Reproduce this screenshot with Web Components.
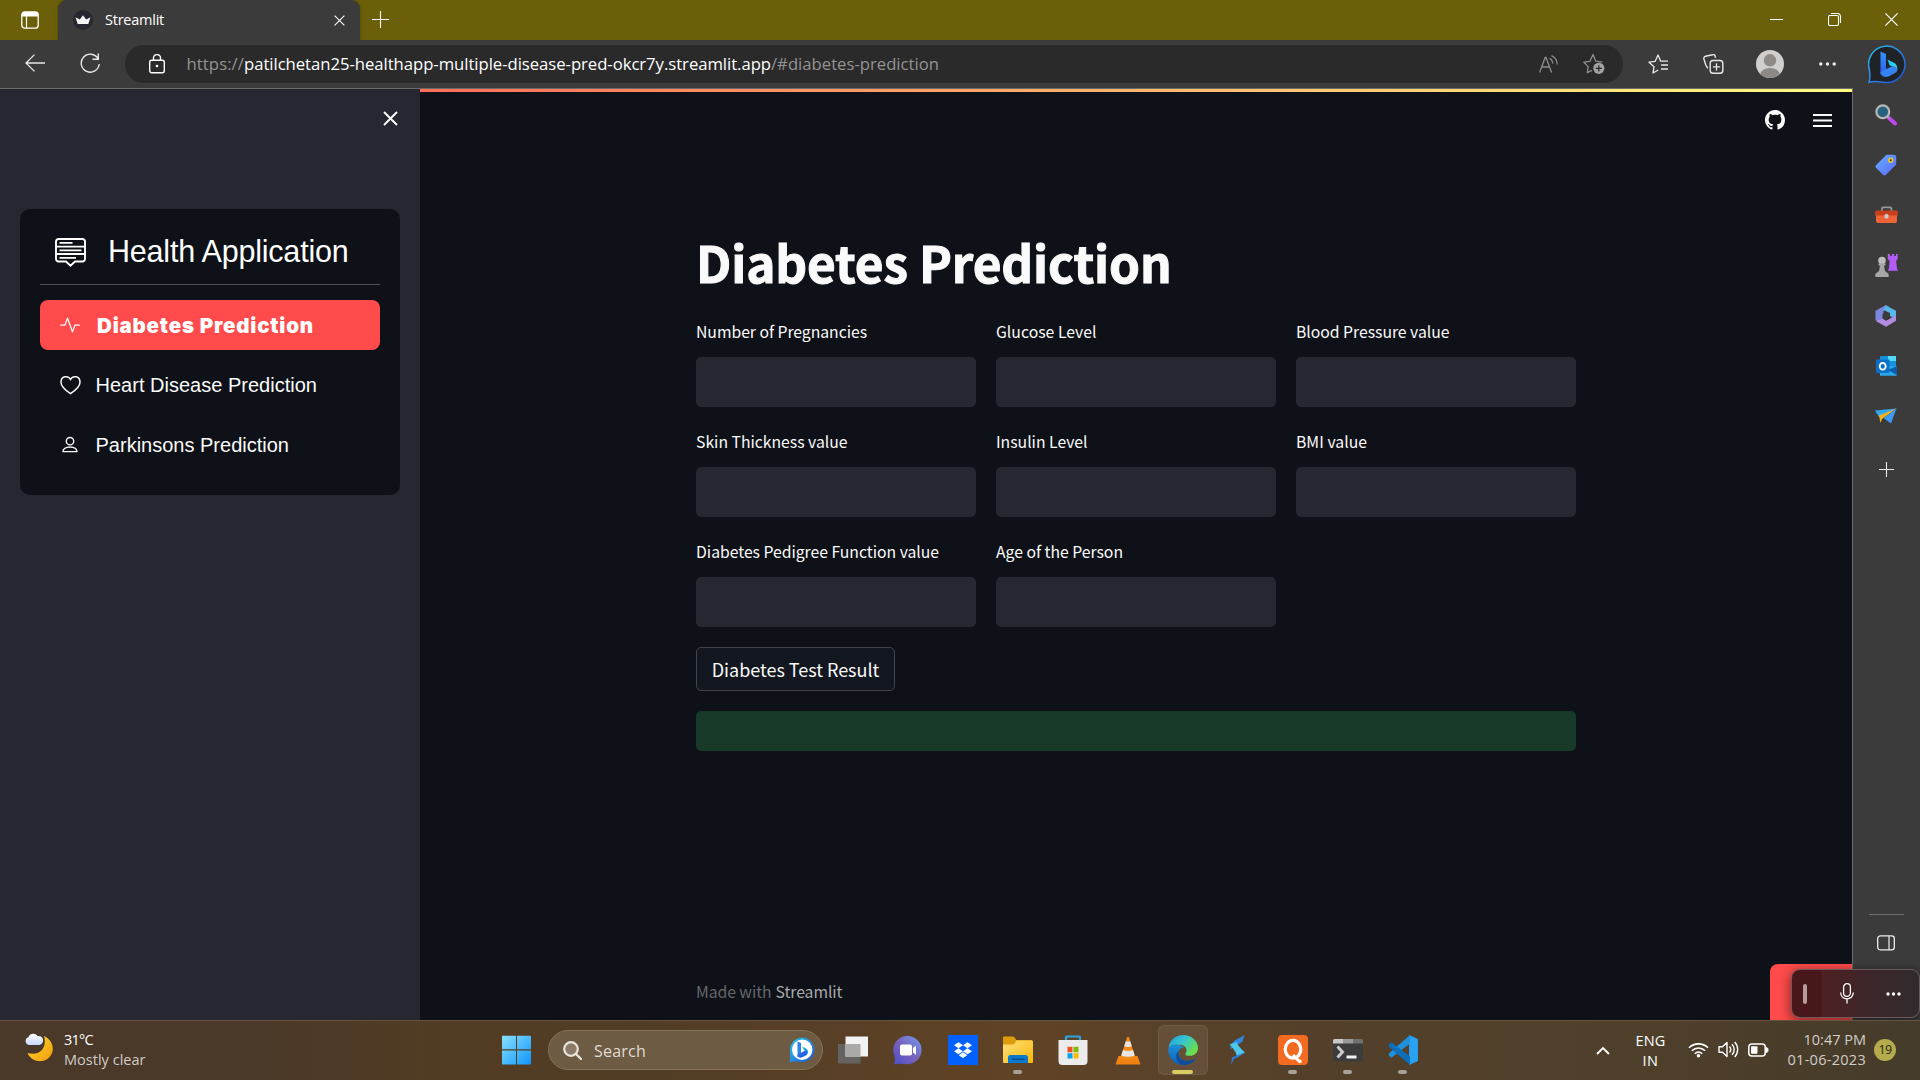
<!DOCTYPE html>
<html lang="en">
<head>
<meta charset="utf-8">
<title>Streamlit</title>
<style>
html,body{margin:0;height:100%;overflow:hidden;background:#0e1117}
</style>
</head>
<body>
<desktop-screen></desktop-screen>
<script>
const ICONS = {
  workspaces:[18,18,`<rect x=".8" y=".8" width="16.4" height="16.4" rx="3" fill="none" stroke="#fff" stroke-width="1.3"/><path d="M1 4a3 3 0 0 1 3-3h10a3 3 0 0 1 3 3v1.500H1z" fill="#fff"/><path d="M5.500 5v12" stroke="#fff" stroke-width="1.200"/>`],
  crown:[20,20,`<circle cx="10" cy="10" r="10" fill="#262730"/><path d="M2.500 7.200 6.800 9.600 10 5.200l3.200 4.400 4.300-2.400-2.200 6.800H4.700z" fill="#f4f4f4"/>`],
  close11:[11,11,`<path d="M.6.6l9.800 9.800M10.400.6.6 10.400" stroke="#fff" stroke-width="1.100"/>`],
  plus17:[17,17,`<path d="M8.500 0v17M0 8.500h17" stroke="#fff" stroke-width="1.100"/>`],
  min:[13,13,`<path d="M0 6.500h13" stroke="#fff"/>`],
  restore:[13,13,`<rect x=".5" y="2.500" width="10" height="10" rx="1.500" fill="none" stroke="#fff" stroke-width="1.100"/><path d="M3 .5h6.500a3 3 0 0 1 3 3V10" fill="none" stroke="#fff" stroke-width="1.100"/>`],
  close13:[13,13,`<path d="M.4.4l12.200 12.200M12.600.4.4 12.600" stroke="#fff" stroke-width="1.200"/>`],
  back:[20,18,`<path d="M20 9H1M9.500.6 1 9l8.500 8.400" fill="none" stroke="#e8e8e8" stroke-width="1.300"/>`],
  reload:[20,21,`<path d="M18 5.600A9 9 0 1 0 19.200 11M18.300.5v5.700h-5.800" fill="none" stroke="#e8e8e8" stroke-width="1.400"/>`],
  lock:[16,20,`<rect x=".7" y="6.200" width="14.600" height="12.600" rx="2" fill="none" stroke="#fff" stroke-width="1.400"/><path d="M4.500 6V4a3.500 3.500 0 0 1 7 0v2" fill="none" stroke="#fff" stroke-width="1.400"/><circle cx="8" cy="12" r="1.300" fill="#fff"/>`],
  aloud:[19,18,`<path d="M.6 17.500 6.200 2.500h.8l5.600 15M2.600 12h8" fill="none" stroke="#8d8d8d" stroke-width="1.300"/><path d="M10.600 3.300a6.500 6.500 0 0 1 3.200 5.200M12.500.6a10 10 0 0 1 5.700 8.800" fill="none" stroke="#8d8d8d" stroke-width="1.200"/>`],
  staradd:[22,22,`<path d="M9 17.300 4.300 19.600l.9-6L.9 9.200l6-.9L10 1.500l2.800 6.700 6.600.9" fill="none" stroke="#8d8d8d" stroke-width="1.300" stroke-linejoin="round"/><circle cx="15.800" cy="15.300" r="5.600" fill="#a2a2a2"/><path d="M15.800 12.200v6.200M12.700 15.300h6.200" stroke="#2a2a2a" stroke-width="1.200"/>`],
  favs:[21,20,`<path d="M10.200 16 5 19l1-6.200L1 8.200l6.200-.9L10 1l2.700 6.200H20M13 11h7M13 15h7" fill="none" stroke="#e8e8e8" stroke-width="1.300" stroke-linejoin="round"/>`],
  collections:[21,20,`<rect x="7.200" y="6.500" width="12.600" height="12.700" rx="2.800" fill="none" stroke="#e8e8e8" stroke-width="1.400"/><path d="M13.500 9.300v7.200M9.900 12.900h7.200" stroke="#e8e8e8" stroke-width="1.300"/><path d="M4.800 14.300 2.800 11 .9 5a2.200 2.200 0 0 1 1.600-2.700l7-1.600a2.200 2.200 0 0 1 2.700 1.500l.4 1.500" fill="none" stroke="#e8e8e8" stroke-width="1.400"/>`],
  avatar:[28,28,`<defs><clipPath id="c"><circle cx="14" cy="14" r="14"/></clipPath></defs><circle cx="14" cy="14" r="14" fill="#d1cfcd"/><g clip-path="url(#c)" fill="#8e8984"><circle cx="14" cy="10.300" r="6.200"/><ellipse cx="14" cy="25" rx="10" ry="7"/></g>`],
  dots:[17,4,`<g fill="#eee"><circle cx="1.800" cy="2" r="1.700"/><circle cx="8.500" cy="2" r="1.700"/><circle cx="15.200" cy="2" r="1.700"/></g>`],
  bing:[39,39,`<defs><linearGradient id="g" x1="0" y1="0" x2="1" y2="1"><stop stop-color="#25c8e8"/><stop offset=".5" stop-color="#2b83ea"/><stop offset="1" stop-color="#1d52dc"/></linearGradient><linearGradient id="h" x1="0" y1="0" x2="0" y2="1"><stop stop-color="#3195ff"/><stop offset="1" stop-color="#2d5bef"/></linearGradient><linearGradient id="k" x1="0" y1="0" x2="1" y2="1"><stop stop-color="#15bde8"/><stop offset="1" stop-color="#4ad9ea"/></linearGradient></defs><path d="M1 37.300C2.500 34 2 30 1.500 25A18.200 18.200 0 1 1 20 37.500C14 37.600 7 35.200 1 37.300z" fill="#202326" stroke="url(#g)" stroke-width="1.500"/><path d="M12.500 6.500 18 9v16l-5.500 4.500z" fill="url(#h)"/><path d="m19.500 14.500 6.500 3.200q3.200 1.800 3.200 5.300v2.500l-4.200-3.800-3.500-1.500z" fill="url(#k)"/><path d="M12.500 27 18 24l7-3c4 0 5 4 3.300 6.200L21 31.200c-4 1.800-8.500 0-8.500-4.200z" fill="#3583f3"/>`],
  bingsmall:[26,26,`<defs><linearGradient id="g" x1="0" y1="0" x2="1" y2="1"><stop stop-color="#20c7e9"/><stop offset=".5" stop-color="#238de5"/><stop offset="1" stop-color="#1854c9"/></linearGradient></defs><path d="M.5 25.200C1.500 22 1 19 1 14A12.200 12.200 0 1 1 13.500 25C9 25 5 23.800.5 25.200z" fill="url(#g)"/><circle cx="13.200" cy="12.800" r="10.200" fill="#fff"/><path d="M8.500 4.500 12 6v11l-3.500 3z" fill="#2b83ea"/><path d="m13 9.500 4 2q2.500 1.500 2 4.500l-4-3z" fill="#17a6dd"/><path d="M8.500 18 16 13.600c3 .5 3.500 3.400 1.300 4.700l-4 2c-2.600 1-4.800 0-4.800-2.300z" fill="#2467e0"/>`],
  closeside:[15,15,`<path d="M1 1l13 13M14 1 1 14" stroke="#fafafa" stroke-width="2"/>`],
  github:[20,20,`<path transform="scale(1.250)" fill="#fff" d="M8 0C3.580 0 0 3.580 0 8c0 3.540 2.290 6.530 5.470 7.590.4.070.55-.17.55-.38 0-.19-.01-.82-.01-1.490-2.010.37-2.530-.49-2.690-.94-.09-.23-.48-.94-.82-1.130-.28-.15-.68-.52-.01-.53.63-.01 1.080.58 1.230.82.72 1.210 1.870.87 2.330.66.07-.52.28-.87.51-1.070-1.780-.2-3.640-.89-3.640-3.950 0-.87.31-1.590.82-2.150-.08-.2-.36-1.020.08-2.120 0 0 .67-.21 2.200.82.64-.18 1.320-.27 2-.27s1.360.09 2 .27c1.530-1.040 2.200-.82 2.200-.82.44 1.100.16 1.920.08 2.120.51.56.82 1.270.82 2.150 0 3.070-1.870 3.750-3.650 3.950.29.25.54.73.54 1.480 0 1.070-.01 1.930-.01 2.200 0 .21.15.46.55.38A8.010 8.010 0 0 0 16 8c0-4.420-3.580-8-8-8z"/>`],
  menu:[19,13,`<path d="M0 1h19M0 6.500h19M0 12h19" stroke="#fafafa" stroke-width="1.900"/>`],
  chatlines:[31,29,`<path d="M3.500 1h24A2.500 2.500 0 0 1 30 3.500V21a2.500 2.500 0 0 1-2.500 2.500h-7.500l-4.500 4.200-4.500-4.200H3.500A2.500 2.500 0 0 1 1 21V3.500A2.500 2.500 0 0 1 3.500 1z" fill="none" stroke="#fff" stroke-width="1.900"/><path d="M4.500 4.800h13M1 8.600h29M4.500 12.300h22M1 16h29M4.500 19.800h16.500" stroke="#fff" stroke-width="1.800"/>`],
  activity:[20,20,`<path transform="scale(1.250)" fill="#fff" fill-rule="evenodd" d="M6 2a.5.5 0 0 1 .47.33L10 12.040l1.530-4.210A.5.5 0 0 1 12 7.500h3.500a.5.5 0 0 1 0 1h-3.150l-1.880 5.170a.5.5 0 0 1-.94 0L6 3.960 4.470 8.170A.5.5 0 0 1 4 8.500H.5a.5.5 0 0 1 0-1h3.150l1.880-5.170A.5.5 0 0 1 6 2Z"/>`],
  heart:[21,20,`<path d="M10.500 18.700C4.500 14.600 1 11.300 1 7.200 1 1 8 0 10.500 4.500 13 0 20 1 20 7.200c0 4.100-3.500 7.400-9.500 11.500z" fill="none" stroke="#fafafa" stroke-width="1.500"/>`],
  person:[20,20,`<circle cx="10" cy="6.200" r="3.700" fill="none" stroke="#fafafa" stroke-width="1.400"/><path d="M3 16.600c0-2.400 2.500-4.600 7-4.600s7 2.200 7 4.600z" fill="none" stroke="#fafafa" stroke-width="1.400" stroke-linejoin="round"/>`],
  search:[22,22,`<path d="m14 14 6 5.500" stroke="#c044f2" stroke-width="4" stroke-linecap="round"/><path d="m12 12.500 2.500 2" stroke="#999" stroke-width="2"/><circle cx="7.800" cy="7.800" r="6.400" fill="#28617f" stroke="#b9b7b5" stroke-width="2.200"/>`],
  tag:[22,22,`<defs><linearGradient id="g" x1="0" y1="0" x2="1" y2="1"><stop stop-color="#66b0ff"/><stop offset="1" stop-color="#5a66ff"/></linearGradient></defs><path d="M11.500.8h7.200a2.500 2.500 0 0 1 2.500 2.500v7.300L11 20.800q-1.500 1.200-3 0L1.200 14q-1.400-1.500 0-3z" fill="url(#g)"/><circle cx="15.700" cy="6.200" r="2.700" fill="#e8c52d"/><circle cx="15.700" cy="6.200" r="1" fill="#333"/>`],
  toolbox:[23,18,`<path d="M7 5V2.600q0-1.200 1.200-1.200h7q1.200 0 1.200 1.200V5" fill="none" stroke="#999" stroke-width="1.700"/><rect y="4.500" width="23" height="5.500" rx="1.500" fill="#c6401f"/><path d="M1 9.500h21V15a2 2 0 0 1-2 2H3a2 2 0 0 1-2-2z" fill="#ed6237"/><rect x="9.500" y="8" width="4" height="4.500" rx="1.500" fill="#ccc"/>`],
  chess:[23,23,`<path d="M12.800 0h2.300v2h1.800V0h2.300v2H21V0h1.700v5l-1.600 2 .8 7 1.100 2.700H12.800l1.200-2.700.6-7-1.800-2z" fill="#b25cf5"/><circle cx="7" cy="6.500" r="3.800" fill="#bcbcbc"/><path d="M3.400 9.500h7.200v1.600L9 12l1 5 3.700 3v3H.3v-3L4 17l1-5-1.600-.9z" fill="#a6a6a6"/>`],
  m365:[22,22,`<path d="M10.500.2 14 1.500 8.500 6v9.500L5 18l-4.500-3V5.700z" fill="#7d86dd"/><path d="M10.500.2 21 5.800V14l-6-3V8L8.500 5z" fill="#55b8e8"/><path d="M21 10.500v5.300L11 21.800.8 16l7.200-2.500 3 2z" fill="#b38be0"/><path d="m11 6.800 4 2.200v4.500l-4 2.300-3.500-2.300V9z" fill="#3b3b3b"/>`],
  outlook:[21,20,`<rect x="4" y="0" width="16" height="12" rx="1" fill="#1490df"/><path d="M12 0h8v5h-8z" fill="#50d9ff"/><path d="M3.500 10 21 10v8.500a1.200 1.200 0 0 1-1.200 1.200H4z" fill="#28a8ea"/><path d="m12 14 9-4v9z" fill="#0a5daa"/><rect y="3.500" width="13.500" height="13.500" rx="1.300" fill="#0a70c8"/><ellipse cx="6.700" cy="10.200" rx="3" ry="3.400" fill="none" stroke="#fff" stroke-width="1.800"/>`],
  plane:[22,16,`<path d="M0 2.500 21.500.5 4 9z" fill="#31a8f0"/><path d="M4 7.500 21.500.5 7 11l-1.500 4z" fill="#f7b416"/><path d="M8.500 10 21.500.5 16 15.500z" fill="#3f98f2"/>`],
  plus15:[15,15,`<path d="M7.500 0v15M0 7.500h15" stroke="#e8e8e8" stroke-width="1.100"/>`],
  panel:[18,16,`<rect x=".7" y=".9" width="16.600" height="14" rx="2.600" fill="none" stroke="#eee" stroke-width="1.300"/><path d="M12 1v14" stroke="#eee" stroke-width="1.200"/>`],
  mic:[14,21,`<rect x="3.600" y=".7" width="6.800" height="12.600" rx="3.400" fill="none" stroke="#fff" stroke-width="1.300"/><path d="M.7 9.500c0 8.500 12.600 8.500 12.600 0M7 16v4.500" fill="none" stroke="#fff" stroke-width="1.300"/>`],
  dots15:[15,4,`<g fill="#fff"><circle cx="2" cy="2" r="1.700"/><circle cx="7.500" cy="2" r="1.700"/><circle cx="13" cy="2" r="1.700"/></g>`],
  weather:[29,30,`<defs><linearGradient id="g" x1="0" y1="0" x2="1" y2="1"><stop stop-color="#ffdc2e"/><stop offset="1" stop-color="#f29a0c"/></linearGradient><linearGradient id="h" x1="0" y1="0" x2="0" y2="1"><stop stop-color="#fff"/><stop offset="1" stop-color="#c7d9fb"/></linearGradient></defs><path d="M19 3c7 3 10.500 10.500 8 17-4 11-20 11-24.500 0 12 3.500 20-5 16.500-17z" fill="url(#g)"/><path d="M4 12a4 4 0 0 1-.5-7.800A5 5 0 0 1 12.500 3a4.400 4.400 0 0 1 2 9z" fill="url(#h)"/>`],
  start:[30,30,`<defs><linearGradient id="g" gradientUnits="userSpaceOnUse" x1="0" y1="0" x2="30" y2="30"><stop stop-color="#8be2ff"/><stop offset="1" stop-color="#0a93fa"/></linearGradient></defs><path d="M0 .800h14V14.300H0zM15 .800h14V14.300h-14zM0 15.500h14v14H0zM15 15.500h14v14h-14z" fill="url(#g)"/>`],
  mag:[19,19,`<circle cx="8" cy="8" r="6.800" fill="#8b7b66" stroke="#e9e4dd" stroke-width="2.200"/><path d="m13 13 5 5" stroke="#e9e4dd" stroke-width="2.400" stroke-linecap="round"/>`],
  taskview:[30,28,`<rect y="8" width="22.500" height="19.500" fill="#656361"/><rect x="7.500" y=".5" width="22.500" height="20" fill="#f2f2f2"/><rect x="7.500" y="8" width="15" height="12.500" fill="#aaa9a8"/>`],
  chat:[30,30,`<defs><linearGradient id="g" x1="0" y1="1" x2="1" y2="0"><stop stop-color="#4b4fc8"/><stop offset=".5" stop-color="#7a62bd"/><stop offset="1" stop-color="#6f9ff0"/></linearGradient></defs><path d="M1 29.500q1.500-4 .5-8.500A14.200 14.200 0 1 1 15 29.200c-5 0-9-1.200-14 .3z" fill="url(#g)"/><rect x="7" y="9.500" width="12" height="11" rx="2" fill="#fff"/><path d="m20 13 3-2.500v9.500L20 17.500z" fill="#fff"/>`],
  dropbox:[30,30,`<path d="M0 0h30v30H0z" fill="#0061fe"/><path d="m10.500 7.200 4.500 3-4.500 3-4.500-3zM19.500 7.200l4.500 3-4.500 3-4.500-3zM10.500 13.200l4.500 3-4.500 3-4.500-3zM19.500 13.200l4.500 3-4.500 3-4.500-3zM15 17.300l4.300 2.900-4.300 2.900-4.300-2.900z" fill="#fff"/>`],
  folder:[30,28,`<defs><linearGradient id="g" x1="0" y1="0" x2="1" y2="1"><stop stop-color="#ffdf7c"/><stop offset="1" stop-color="#f9b806"/></linearGradient></defs><path d="M0 1.500Q0 .500 1 .500h9.500l3 3.500H29V10H0z" fill="#dc9c0b"/><path d="M0 8.500h10.500l3-4H29q1 0 1 1v20.500a1 1 0 0 1-1 1H1a1 1 0 0 1-1-1z" fill="url(#g)"/><path d="M5 27v-5.500a2.500 2.500 0 0 1 2.500-2.500h15a2.500 2.500 0 0 1 2.500 2.500V27z" fill="#0a78cc"/><path d="M9 23.200h12.500" stroke="#0a4d8f" stroke-width="1.500"/>`],
  store:[30,30,`<path d="M8 6V2.200Q8 1.500 8.700 1.500h12.600q.7 0 .7.700V6" fill="none" stroke="#2aa5e4" stroke-width="2.200"/><path d="M.5 5h29v21a4 4 0 0 1-4 4h-21a4 4 0 0 1-4-4z" fill="#ececec"/><path d="M9.500 11.800h5v5.500h-5z" fill="#f25022"/><path d="M15.500 11.800h5v5.500h-5z" fill="#7fba00"/><path d="M9.500 18.200h5v5.300h-5z" fill="#00a4ef"/><path d="M15.500 18.200h5v5.300h-5z" fill="#ffb900"/>`],
  vlc:[26,29,`<path d="M3.500 20h19l3 8.500H.5z" fill="#f18213"/><path d="M12 1.500q1-1.500 2 0l6.800 21q-7.800 3.500-15.600 0z" fill="#f58a1c"/><path d="m10.700 5.500h4.600l1.500 4.700q-3.800 1.400-7.600 0zM8 14q5 2 10 0l1.700 5.500q-6.700 2.400-13.400 0z" fill="#e6e6e6"/>`],
  edge:[30,30,`<defs><linearGradient id="g" x1="0" y1="0" x2="1" y2=".6"><stop stop-color="#1f9fe0"/><stop offset=".5" stop-color="#35c5cf"/><stop offset="1" stop-color="#6be047"/></linearGradient><linearGradient id="h" x1="0" y1="0" x2="0" y2="1"><stop stop-color="#1a94dc"/><stop offset="1" stop-color="#0e5fb4"/></linearGradient></defs><path d="M.5 13C1.500 5 8 0 15 0c8.500 0 15 6 15 13 0 5-4 7.800-8.200 7.800-3.500 0-5.200-1-4.200-2.600 3-4-1-9-6.600-8.500C5 9.500 1.500 11 .5 13z" fill="url(#g)"/><path d="M.2 14.500C2 8 12 8 16 13c-5-1-7 4.500-4.500 9 3 5 9 6.500 14 3.800C18 34 1 30.500.2 14.500z" fill="url(#h)"/><path d="M10.500 16c-2 7 5 13 17.500 7.500-3 4.500-7.500 6.500-12.500 6.500C9 29.500 5.500 20 10.500 16z" fill="#104d9b"/>`],
  sapp:[17,30,`<path d="m15.500 0-2 6.500L5.500 12l-4 2C2 9 5 5 8.500 4z" fill="#3185e2"/><path d="M.5 9.500 7.500 7q2 5 8.500 10.500L8 22.500Q8 17 .5 9.500z" fill="#4cc8ee"/><path d="M16.500 17 9 22l-4 2-3 6 1-7.500z" fill="#2f7bd8"/>`],
  qapp:[30,30,`<rect width="30" height="30" rx="4" fill="#f36b21"/><ellipse cx="15" cy="14.300" rx="7.800" ry="8.900" fill="none" stroke="#fff" stroke-width="3.200"/><path d="m15 20 6.500 6.500 2-.5" fill="none" stroke="#fff" stroke-width="3"/>`],
  terminal:[30,23,`<path d="M0 1.500Q0 0 1.500 0H10v5H0z" fill="#c9c9c9"/><path d="M10 0h10v5H10z" fill="#999"/><path d="M20 0h8.500Q30 0 30 1.500V5H20z" fill="#717171"/><path d="M0 4.500h30V21q0 1.500-1.500 1.500h-27Q0 22.500 0 21z" fill="#3c3c3c"/><path d="m4.500 7.500 5 5.500-5 5.500" fill="none" stroke="#ccc" stroke-width="3"/><path d="M13.500 18h10" stroke="#f2f2f2" stroke-width="3"/>`],
  vscode:[30,30,`<path d="m21 0 8 3.500q1 .5 1 1.500v20q0 1-1 1.500L21 30z" fill="#27a1f0"/><path d="M22 0 .8 18.500v2.200l2.600 2L22 8.500z" fill="#1f90dc"/><path d="M22 30 .8 11.500V9.300l2.600-2L22 21.500z" fill="#0c6fb8"/>`],
  chevron:[14,9,`<path d="m1 8 6-6 6 6" fill="none" stroke="#fff" stroke-width="1.900"/>`],
  wifi:[21,16,`<g fill="none" stroke="#fff" stroke-width="1.600"><path d="M1 5.800a13.400 13.400 0 0 1 19 0M3.900 8.800a9.300 9.300 0 0 1 13.200 0M6.800 11.700a5.200 5.200 0 0 1 7.400 0"/></g><circle cx="10.500" cy="13.700" r="1.800" fill="#fff"/>`],
  sound:[21,17,`<path d="M1 5.700h3.500L9 1.500v14L4.500 11.300H1z" fill="none" stroke="#fff" stroke-width="1.400" stroke-linejoin="round"/><path d="M11.500 5.500a4.500 4.500 0 0 1 0 6M14 3.200a7.500 7.500 0 0 1 0 10.600M16.700 1a11 11 0 0 1 0 15" fill="none" stroke="#fff" stroke-width="1.400"/>`],
  battery:[21,14,`<rect x=".8" y=".9" width="16.400" height="12.200" rx="3" fill="none" stroke="#fff" stroke-width="1.500"/><rect x="3" y="3.200" width="6.500" height="7.600" rx="1" fill="#fff"/><path d="M18.500 4.500c2 0 2 5 0 5z" fill="#fff" stroke="#fff"/>`]
};

const define = (tag, html) => customElements.define(tag, class extends HTMLElement {
  connectedCallback() {
    if (this.shadowRoot) return;
    const t = document.createElement('template');
    t.innerHTML = html;
    this.attachShadow({mode: 'open'}).append(t.content.cloneNode(true));
  }
});

define('desktop-screen', `<style>
:host{display:flex;flex-direction:column;width:1920px;height:1080px;position:relative;overflow:hidden;background:#3b3b3b;font-family:"Open Sans","Noto Sans",sans-serif;color:#fff}
.body{flex:1;display:flex;min-height:0}
</style>
<browser-tabs></browser-tabs><browser-toolbar></browser-toolbar>
<div class="body"><app-sidebar></app-sidebar><app-main></app-main><edge-rail></edge-rail></div>
<task-bar></task-bar><voice-widget></voice-widget>`);

define('browser-tabs', `<style>
:host{display:flex;height:40px;background:#6b6009;align-items:flex-start}
.ws{margin:11px 19px 0 21px}
.tab{width:302px;height:40px;box-sizing:border-box;background:#3b3b3b;border-radius:9px 9px 0 0;display:flex;align-items:center;padding:0 15px;box-shadow:0 0 3px #0005}
.tab fit-text{margin-left:12px;font-size:14.500px;line-height:20px;margin-top:-1px}
.tab .x{margin-left:auto;margin-top:1px}
.add{margin:11px 0 0 12px}
.win{margin:13px 22px 0 auto;display:flex;gap:44.500px}
</style>
<svg-icon class="ws" name="workspaces"></svg-icon>
<div class="tab"><svg-icon name="crown"></svg-icon><fit-text w="59">Streamlit</fit-text><svg-icon class="x" name="close11"></svg-icon></div>
<svg-icon class="add" name="plus17"></svg-icon>
<div class="win"><svg-icon name="min"></svg-icon><svg-icon name="restore"></svg-icon><svg-icon name="close13"></svg-icon></div>`);

define('browser-toolbar', `<style>
:host{display:flex;height:49px;box-sizing:border-box;background:linear-gradient(#6b6b6b,#6b6b6b) 0 100%/1853px 1px no-repeat #3b3b3b;align-items:flex-start;padding-left:25px}
.back{margin-top:14px}.re{margin:13px 25px 0 35px}
.url{margin-top:5px;width:1498px;height:38px;border-radius:19px;background:#2a2a2a;display:flex;align-items:center;box-sizing:border-box;padding:0 18px 0 24px;font-size:16.700px;line-height:24px;color:#939393}
.url .l{margin-right:21.500px}.url b{font-weight:400;color:#fff;display:flex}
.al{margin:0 25px 0 auto}
.f{margin:14px 34px 0 25px}.c{margin-top:14px}.a{margin:10px 35px 0 32px}.d{margin-top:22px}.b{margin:5px 0 0 32px}
</style>
<svg-icon class="back" name="back"></svg-icon><svg-icon class="re" name="reload"></svg-icon>
<div class="url"><svg-icon class="l" name="lock"></svg-icon><fit-text w="57.500">https://</fit-text><b><fit-text w="527">patilchetan25-healthapp-multiple-disease-pred-okcr7y.streamlit.app</fit-text></b><fit-text w="168">/#diabetes-prediction</fit-text>
<svg-icon class="al" name="aloud"></svg-icon><svg-icon name="staradd"></svg-icon></div>
<svg-icon class="f" name="favs"></svg-icon><svg-icon class="c" name="collections"></svg-icon><svg-icon class="a" name="avatar"></svg-icon><svg-icon class="d" name="dots"></svg-icon><svg-icon class="b" name="bing"></svg-icon>`);

define('app-sidebar', `<style>
:host{display:flex;flex-direction:column;width:420px;background:#262730;font-family:"Liberation Sans",Arial,sans-serif;color:#fafafa}
.x{align-self:flex-end;margin:22px 22px 83px 0}
.card{margin:0 20px;height:286px;box-sizing:border-box;border-radius:10px;background:#0e1117;padding:0 20px;display:flex;flex-direction:column}
.head{height:75px;display:flex;align-items:center;padding-left:14.500px;border-bottom:1px solid #4d4f53;margin-bottom:15px}
.head svg-icon{margin:11px 22.500px 0 0}
.head fit-text{font-size:30.500px;line-height:36px;margin-top:9px;color:#fff}
nav{display:flex;flex-direction:column;gap:10px}
</style>
<svg-icon class="x" name="closeside"></svg-icon>
<div class="card"><div class="head"><svg-icon name="chatlines"></svg-icon><fit-text w="240.500">Health Application</fit-text></div>
<nav><nav-item active><svg-icon slot="icon" name="activity"></svg-icon><fit-text w="217">Diabetes Prediction</fit-text></nav-item>
<nav-item><svg-icon slot="icon" name="heart"></svg-icon><fit-text w="221.500">Heart Disease Prediction</fit-text></nav-item>
<nav-item><svg-icon slot="icon" name="person"></svg-icon><fit-text w="193.500">Parkinsons Prediction</fit-text></nav-item></nav></div>`);

define('nav-item', `<style>
:host{display:flex;align-items:center;height:50px;box-sizing:border-box;padding-left:20px;border-radius:8px;font-size:20px;line-height:30px}
:host([active]){background:#ff4b4b;color:#fff;font-weight:900;font-family:Inter,"Liberation Sans",sans-serif;font-size:20.500px}
.i{width:35.500px;display:flex}
:host([active]) .t{margin:1px 0 0 1.500px}
.t{display:flex}
</style><div class="i"><slot name="icon"></slot></div><div class="t"><slot></slot></div>`);

define('app-main', `<style>
:host{display:flex;flex-direction:column;width:1432px;background:#0e1117;color:#fafafa;font-family:"Noto Sans CJK JP","Noto Sans CJK SC",sans-serif}
.stripe{height:3px;flex:none;background:linear-gradient(90deg,#ff6e5a,#fffd80)}
.top{height:56px;flex:none;display:flex;align-items:center;justify-content:flex-end;gap:28px;padding-right:20px}
.col{width:880px;flex:1;display:flex;flex-direction:column;align-items:flex-start;margin-left:276px}
h1{margin:81px 0 24px;font-size:49.500px;line-height:66px;height:66px;font-weight:700;-webkit-text-stroke:1px #fafafa}
.grid{display:grid;grid-template-columns:repeat(3,280px);gap:22px 20px}
.btn{margin:20px 0;width:199px;height:44px;box-sizing:border-box;border:1px solid #41444c;border-radius:5px;background:#131720;display:flex;justify-content:center;align-items:center;font-size:18px;line-height:30px;padding-bottom:1px}
.ok{width:880px;height:40px;border-radius:5px;background:#173928}
footer{margin-top:auto;padding-bottom:16px;display:flex;font-size:15.750px;line-height:25px;color:#65676b;gap:4px}
footer b{font-weight:400;color:#a9aaac;display:flex}
</style>
<div class="stripe"></div><div class="top"><svg-icon name="github"></svg-icon><svg-icon name="menu"></svg-icon></div>
<div class="col"><h1><fit-text w="475.500">Diabetes Prediction</fit-text></h1>
<div class="grid">
<text-field><fit-text w="171">Number of Pregnancies</fit-text></text-field><text-field><fit-text w="100.500">Glucose Level</fit-text></text-field><text-field><fit-text w="153.500">Blood Pressure value</fit-text></text-field>
<text-field><fit-text w="151.500">Skin Thickness value</fit-text></text-field><text-field><fit-text w="91.500">Insulin Level</fit-text></text-field><text-field><fit-text w="71">BMI value</fit-text></text-field>
<text-field><fit-text w="243">Diabetes Pedigree Function value</fit-text></text-field><text-field><fit-text w="127">Age of the Person</fit-text></text-field></div>
<div class="btn"><fit-text w="167.500">Diabetes Test Result</fit-text></div><div class="ok"></div>
<footer><fit-text w="75.500">Made with</fit-text><b><fit-text w="67">Streamlit</fit-text></b></footer></div>`);

define('text-field', `<style>
:host{display:flex;flex-direction:column;width:280px;font-size:15.750px;line-height:25px}
.label{height:38px}.box{height:50px;border-radius:5px;background:#262730}
</style><div class="label"><slot></slot></div><div class="box"></div>`);

define('edge-rail', `<style>
:host{display:flex;flex-direction:column;align-items:center;width:68px;box-sizing:border-box;border-left:1px solid #6b6b6b;background:#3b3b3b;padding-right:1px}
.r{height:50.200px;display:flex;align-items:center}
.r:first-child{margin-top:1.500px}
.r:nth-child(2){margin-top:.800px}
.p{margin-top:3.500px}
hr{width:35px;border:0;border-top:1px solid #6e6e6e;margin:auto 0 20px}
.q{margin-bottom:69px}
</style>
<div class="r"><svg-icon name="search"></svg-icon></div><div class="r"><svg-icon name="tag"></svg-icon></div><div class="r"><svg-icon name="toolbox"></svg-icon></div><div class="r"><svg-icon name="chess"></svg-icon></div><div class="r"><svg-icon name="m365"></svg-icon></div><div class="r"><svg-icon name="outlook"></svg-icon></div><div class="r"><svg-icon name="plane"></svg-icon></div><div class="r p"><svg-icon name="plus15"></svg-icon></div>
<hr><svg-icon class="q" name="panel"></svg-icon>`);

define('voice-widget', `<style>
:host{position:absolute;left:1770px;top:964px;width:150px;height:56px;display:block;overflow:hidden}
.red{width:82px;height:56px;background:#ff4b4b;border-radius:8px 0 0 0}
.w{position:absolute;left:20.500px;top:5px;width:129px;height:49px;box-sizing:border-box;border:1px solid #6e5a5a;border-radius:9px;background:linear-gradient(90deg,#481719 0 29px,#4e2022 30px,#3c2629 78px,#302b2e);display:flex;align-items:center;box-shadow:0 3px 12px 1px #0007}
.h{width:4px;height:20px;border-radius:2px;background:#b5999b;margin-left:11px}
.m{margin:0 32px 0 33px}
</style><div class="red"></div><div class="w"><div class="h"></div><svg-icon class="m" name="mic"></svg-icon><svg-icon name="dots15"></svg-icon></div>`);

define('task-app', `<style>
:host{display:flex;flex-direction:column;align-items:center;width:50px;height:50px;box-sizing:border-box;border-radius:6px;border:1px solid transparent}
:host([active]){background:#ffffff14;border-color:#ffffff10}
.i{height:48px;display:flex;align-items:center;margin-bottom:-4px}
.d{width:9px;height:4px;border-radius:2px;background:#aaa196;display:none}
:host([open]) .d,:host([active]) .d{display:block}
:host([active]) .d{width:21px;background:#d8cd63}
</style><div class="i"><slot></slot></div><div class="d"></div>`);

define('task-bar', `<style>
:host{display:flex;height:60px;box-sizing:border-box;border-top:1px solid #66553e;background:linear-gradient(90deg,#4a3828 0,#4a3828 260px,#523d23 450px,#513c25 640px,#5f4326 1020px,#54402a 1300px,#50402b 1600px,#453b2a 1920px);font-size:14.500px;line-height:20px;color:#fff}
.wx{display:flex;width:477px;padding-left:25px;box-sizing:border-box}
.wx svg-icon{margin-top:12px;margin-right:10px}
.c{display:flex;flex-direction:column;margin-top:8.500px}
.dim{color:#d2cdc6}
.st{margin:14px 16px 0 25px}
.s{margin-top:9px;width:275px;height:40px;box-sizing:border-box;border:1px solid #857359;border-radius:20px;background:#6d5b43;display:flex;align-items:center;padding:0 7px 0 14px;font-size:16px;color:#e0dbd2}
.s fit-text{margin:1px 0 0 12px}.s .b{margin-left:auto}
.apps{display:flex;gap:5px;margin:4px 0 0 4.500px}
.tray{display:flex;margin-left:auto;align-items:flex-start}
.ch{margin-top:25px}.l{align-items:center;width:30px;margin-left:26px;margin-top:9.500px}
.wi{margin:21px 9px 0 22px}.so{margin:20px 9px 0 0}.ba{margin:22px 18.500px 0 0}
.t{align-items:flex-end;width:79px}
.n{width:22px;height:22px;border-radius:50%;background:#b5ab4c;color:#2b2712;font-size:12.500px;line-height:22px;display:flex;justify-content:center;margin:18px 24px 0 8px}
</style>
<div class="wx"><svg-icon name="weather"></svg-icon><div class="c"><fit-text w="29">31°C</fit-text><span class="dim"><fit-text w="81.500">Mostly clear</fit-text></span></div></div>
<svg-icon class="st" name="start"></svg-icon>
<div class="s"><svg-icon name="mag"></svg-icon><fit-text w="52">Search</fit-text><svg-icon class="b" name="bingsmall"></svg-icon></div>
<div class="apps"><task-app><svg-icon name="taskview"></svg-icon></task-app><task-app><svg-icon name="chat"></svg-icon></task-app><task-app><svg-icon name="dropbox"></svg-icon></task-app><task-app open><svg-icon name="folder"></svg-icon></task-app><task-app><svg-icon name="store"></svg-icon></task-app><task-app><svg-icon name="vlc"></svg-icon></task-app><task-app active><svg-icon name="edge"></svg-icon></task-app><task-app><svg-icon name="sapp"></svg-icon></task-app><task-app open><svg-icon name="qapp"></svg-icon></task-app><task-app open><svg-icon name="terminal"></svg-icon></task-app><task-app open><svg-icon name="vscode"></svg-icon></task-app></div>
<div class="tray"><svg-icon class="ch" name="chevron"></svg-icon><div class="c l"><fit-text w="30">ENG</fit-text><fit-text w="16">IN</fit-text></div>
<svg-icon class="wi" name="wifi"></svg-icon><svg-icon class="so" name="sound"></svg-icon><svg-icon class="ba" name="battery"></svg-icon>
<div class="c t dim"><fit-text w="62.500">10:47 PM</fit-text><fit-text w="78.500">01-06-2023</fit-text></div><div class="n"><fit-text w="13">19</fit-text></div></div>`);

customElements.define('svg-icon', class extends HTMLElement {
  connectedCallback() {
    if (this.shadowRoot) return;
    const [w, h, body] = ICONS[this.getAttribute('name')];
    this.attachShadow({mode: 'open'}).innerHTML =
      `<style>:host{display:block;flex:none;width:${w}px;height:${h}px}svg{display:block}</style><svg width="${w}" height="${h}" viewBox="0 0 ${w} ${h}">${body}</svg>`;
  }
});

// Tracks its text so that the run spans exactly the width given in "w".
customElements.define('fit-text', class extends HTMLElement {
  connectedCallback() {
    if (this.shadowRoot) return;
    this.attachShadow({mode: 'open'}).innerHTML =
      `<style>:host{display:block;white-space:nowrap;flex:none;width:max-content;letter-spacing:0}</style><slot></slot>`;
    const w = parseFloat(this.getAttribute('w'));
    const n = [...this.textContent].length;
    const d = (w - this.getBoundingClientRect().width) / n;
    this.style.letterSpacing = d.toFixed(3) + 'px';
  }
});
</script>
</body>
</html>
